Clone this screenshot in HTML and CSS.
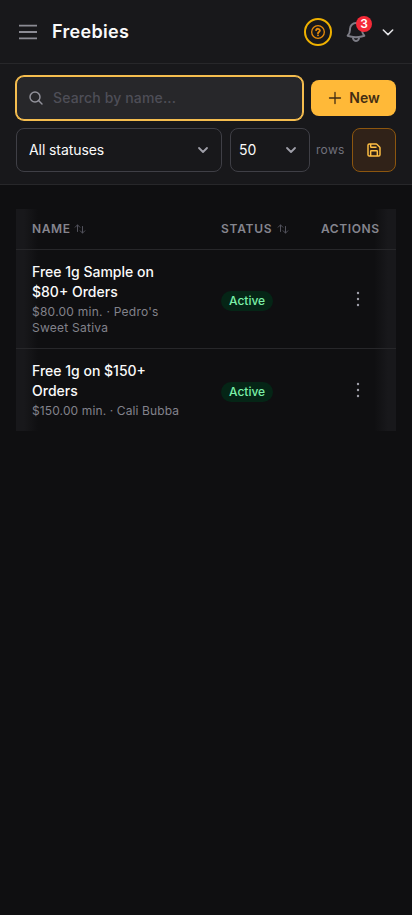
FILE: index.html
```html
<!DOCTYPE html>
<html lang="en">
<head>
<meta charset="utf-8">
<meta name="viewport" content="width=device-width, initial-scale=1">
<title>Freebies</title>
<link rel="stylesheet" href="styles.css">
</head>
<body>
<header class="topbar">
  <button class="plain menu" aria-label="Menu"><svg width="24" height="24" viewBox="0 0 24 24" stroke-width="1.8"><path d="M3 5.6h18M3 12h18M3 18.4h18"/></svg></button>
  <h1>Freebies</h1>
  <button class="plain help" aria-label="Help"><svg width="16" height="16" viewBox="0 0 24 24" stroke-width="2"><circle cx="12" cy="12" r="9.5"/><path stroke-width="2.8" d="M9.1 9.2a3 3 0 0 1 5.8.6c0 2-2.9 2.2-2.9 4M12 17h.01"/></svg></button>
  <button class="plain bell" aria-label="Notifications"><svg width="24" height="24" viewBox="0 0 24 24" stroke-width="2"><path d="M14.86 17.08a24 24 0 0 0 5.45-1.31A9 9 0 0 1 18 9.75V9A6 6 0 0 0 6 9v.75a9 9 0 0 1-2.31 6.02c1.73.64 3.56 1.09 5.45 1.31m5.72 0a24 24 0 0 1-5.72 0m5.72 0a3 3 0 1 1-5.72 0"/></svg><span class="count">3</span></button>
  <button class="plain account" aria-label="Account"><svg width="16" height="16" viewBox="0 0 16 16" stroke-width="1.5"><path d="M3.3 6l4.7 4.6L12.7 6"/></svg></button>
</header>
<section class="toolbar">
  <div class="line">
    <label class="search"><svg width="16" height="16" viewBox="0 0 24 24" stroke-width="2.2"><circle cx="10.5" cy="10.5" r="7.5"/><path d="M21 21l-5.2-5.2"/></svg><input type="text" placeholder="Search by name..."></label>
    <button class="new"><svg width="16" height="16" viewBox="0 0 16 16" stroke-width="1.3"><path d="M8 2.5v11M2.5 8h11"/></svg>New</button>
  </div>
  <div class="line">
    <div class="select statuses"><span>All statuses</span><svg width="12" height="12" viewBox="0 0 12 12" stroke-width="1.8"><path d="M2 4l4 4 4-4"/></svg></div>
    <div class="select size"><span>50</span><svg width="12" height="12" viewBox="0 0 12 12" stroke-width="1.8"><path d="M2 4l4 4 4-4"/></svg></div>
    <span class="rows">rows</span>
    <button class="save" aria-label="Save"><svg width="16" height="16" viewBox="0 0 24 24" stroke-width="2.2"><path d="M15.2 3a2 2 0 0 1 1.4.6l3.8 3.8a2 2 0 0 1 .6 1.4V19a2 2 0 0 1-2 2H5a2 2 0 0 1-2-2V5a2 2 0 0 1 2-2zM17 21v-7a1 1 0 0 0-1-1H8a1 1 0 0 0-1 1v7M7 3v4a1 1 0 0 0 1 1h7"/></svg></button>
  </div>
</section>
<main>
  <div class="table">
    <div class="row head">
      <div class="cell">NAME<svg width="12" height="12" viewBox="0 0 12 12" stroke-width="1"><path d="M3.5 8.5V2M1.2 4.2L3.5 1.9 5.8 4.2M8.5 3.5V10M6.2 7.8l2.3 2.3 2.3-2.3"/></svg></div>
      <div class="cell status">STATUS<svg width="12" height="12" viewBox="0 0 12 12" stroke-width="1"><path d="M3.5 8.5V2M1.2 4.2L3.5 1.9 5.8 4.2M8.5 3.5V10M6.2 7.8l2.3 2.3 2.3-2.3"/></svg></div>
      <div class="cell">ACTIONS</div>
    </div>
    <div class="row">
      <div class="cell"><div class="name">Free 1g Sample on<br>$80+ Orders</div><div class="sub">$80.00 min. · Pedro's<br>Sweet Sativa</div></div>
      <div class="cell"><span class="badge">Active</span></div>
      <div class="cell more"><svg width="20" height="20" viewBox="0 0 20 20"><circle cx="10" cy="4" r="1.2"/><circle cx="10" cy="10" r="1.2"/><circle cx="10" cy="16" r="1.2"/></svg></div>
    </div>
    <div class="row">
      <div class="cell"><div class="name">Free 1g on $150+<br>Orders</div><div class="sub tight">$150.00 min. · Cali Bubba</div></div>
      <div class="cell"><span class="badge">Active</span></div>
      <div class="cell more"><svg width="20" height="20" viewBox="0 0 20 20"><circle cx="10" cy="4" r="1.2"/><circle cx="10" cy="10" r="1.2"/><circle cx="10" cy="16" r="1.2"/></svg></div>
    </div>
  </div>
</main>
</body>
</html>
```
FILE: styles.css
```css
* { box-sizing: border-box; }
body { margin: 0; min-height: 100vh; background: #0f0f11; color: #fafafa; font: 14px/20px Inter, sans-serif; }
svg { display: block; flex: none; fill: none; stroke: currentColor; stroke-linecap: round; stroke-linejoin: round; }
button { font: inherit; padding: 0; border: 0; cursor: pointer; }
.plain { background: none; color: #8b8b94; }
.topbar { display: flex; align-items: center; height: 64px; padding: 0 16px; background: #18181b; border-bottom: 1px solid #27272a; }
.menu svg { stroke-linecap: butt; }
h1 { flex: 1; margin: 0 0 0 12px; font-size: 18px; line-height: 28px; font-weight: 600; letter-spacing: .3px; }
.help { display: grid; place-items: center; width: 28px; height: 28px; border: 2px solid #efb100; border-radius: 50%; color: #e58a0b; }
.bell { position: relative; margin-left: 12px; color: #7d7d86; }
.count { position: absolute; top: -4px; right: -4px; width: 16px; height: 16px; border-radius: 8px; background: #f52a38; color: #fff; font-size: 12px; line-height: 16px; font-weight: 600; }
.account { margin-left: 12px; color: #e4e4e7; }
.toolbar { display: flex; flex-direction: column; gap: 8px; height: 121px; padding: 12px 16px; background: #18181b; border-bottom: 1px solid #27272a; }
.line { display: flex; align-items: center; gap: 8px; }
.search { display: flex; align-items: center; gap: 9px; flex: 1; min-width: 0; height: 44px; padding: 0 11px; border: 1px solid #f5bd4f; border-radius: 8px; background: #27272a; box-shadow: 0 0 0 1px #f5bd4f; color: #92929b; }
.search input { flex: 1; min-width: 0; padding: 0; border: 0; outline: 0; background: none; color: #fafafa; font: inherit; font-weight: 500; letter-spacing: .14px; }
.search input::placeholder { color: #4e4e57; opacity: 1; }
.new { display: flex; align-items: center; justify-content: center; gap: 6px; width: 85px; height: 36px; border-radius: 8px; background: #ffb938; color: #432d13; font-weight: 600; }
.select { display: flex; align-items: center; justify-content: space-between; height: 44px; padding: 0 12px; border: 1px solid #3f3f46; border-radius: 8px; }
.select svg { color: #9f9fa9; }
.statuses { flex: 1; letter-spacing: -.08px; }
.size { width: 80px; padding-left: 8px; }
.rows { width: 28px; margin-left: -2px; color: #71717b; font-size: 12px; letter-spacing: .3px; }
.save { display: grid; place-items: center; width: 44px; height: 44px; border: 1px solid #8c560f; border-radius: 8px; background: #302218; color: #ffbf43; }
main { padding: 24px 16px; }
.table { background: linear-gradient(90deg, #18181b 8px, transparent 22px, transparent calc(100% - 22px), #18181b calc(100% - 8px)); }
.row { display: grid; grid-template-columns: 189px 100px 91px; align-items: center; border-bottom: 1px solid #27272a; }
.row:last-child { border-bottom: 0; }
.cell { padding: 12px 0 12px 16px; }
.head .cell { display: flex; align-items: center; gap: 3px; height: 40px; padding-top: 0; padding-bottom: 0; color: #85858e; font-size: 12px; line-height: 16px; font-weight: 600; letter-spacing: .6px; }
.head .status { gap: 5px; letter-spacing: .75px; }
.head svg { color: #52525c; }
.name { font-weight: 500; }
.sub { margin-top: 2px; color: #82828b; font-size: 12px; line-height: 16px; letter-spacing: .25px; }
.tight { letter-spacing: .12px; }
.badge { display: block; width: fit-content; margin-top: 3px; padding: 2px 8px; border-radius: 10px; background: #052516; color: #7bf1a8; font-size: 12px; line-height: 16px; font-weight: 500; }
.more { padding-left: 43px; }
.more svg { fill: #9f9fa9; stroke: none; }
```
